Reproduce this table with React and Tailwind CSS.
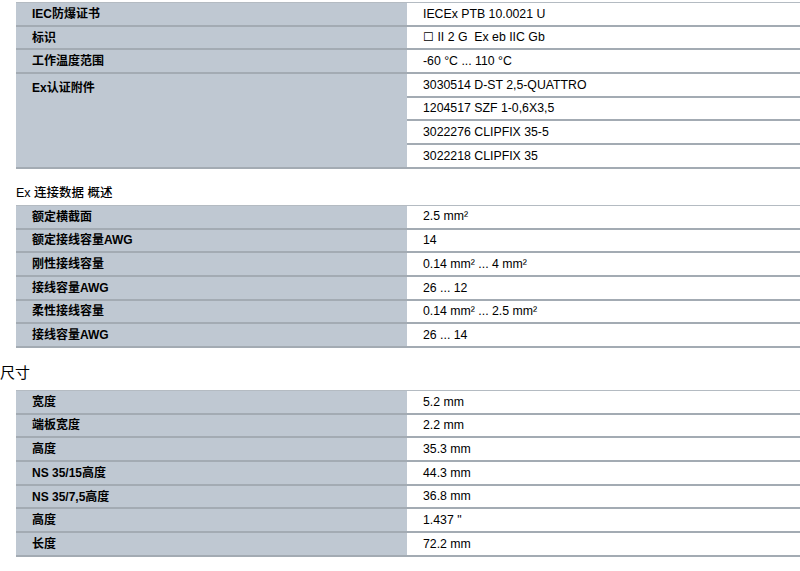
import React from "react";

const font = {
  fontFamily: '"Liberation Sans", Arial, "Noto Sans CJK SC", sans-serif',
};

const Row = ({ label, value }) => (
  <div className="grid grid-cols-[391px_1fr] h-[23.7px]">
    <div className="bg-[#bfc8d2] border-b-2 border-[#a3abb3] pl-4 flex items-center font-bold text-[12px] text-black">
      {label}
    </div>
    <div className="bg-white border-b-2 border-[#a3abb3] pl-4 flex items-center text-[12.3px] text-black whitespace-pre">
      {value}
    </div>
  </div>
);

const Table = ({ rows }) => (
  <div className="ml-4 border-t border-[#b4bbc2]">
    {rows.map((r, i) => (
      <Row key={i} label={r[0]} value={r[1]} />
    ))}
  </div>
);

const accessories = [
  "3030514 D-ST 2,5-QUATTRO",
  "1204517 SZF 1-0,6X3,5",
  "3022276 CLIPFIX 35-5",
  "3022218 CLIPFIX 35",
];

export default function App() {
  return (
    <div className="w-[800px] h-[571px] bg-white overflow-hidden pt-[2px]" style={font}>
      <Table
        rows={[
          ["IEC防爆证书", "IECEx PTB 10.0021 U"],
          ["标识", "☐ II 2 G  Ex eb IIC Gb"],
          ["工作温度范围", "-60 °C ... 110 °C"],
        ]}
      />
      {/* Ex认证附件 spans four value rows */}
      <div className="ml-4 grid grid-cols-[391px_1fr]">
        <div className="bg-[#bfc8d2] border-b-2 border-[#a3abb3] pl-4 pt-[5px] font-bold text-[12px] text-black">
          Ex认证附件
        </div>
        <div>
          {accessories.map((a) => (
            <div
              key={a}
              className="h-[23.7px] border-b-2 border-[#a3abb3] pl-4 flex items-center text-[12.3px] text-black"
            >
              {a}
            </div>
          ))}
        </div>
      </div>

      <div className="pl-4 mt-[16px] mb-[4px] text-[12.5px] font-medium text-black leading-[16px]">
        Ex 连接数据 概述
      </div>
      <Table
        rows={[
          ["额定横截面", "2.5 mm²"],
          ["额定接线容量AWG", "14"],
          ["刚性接线容量", "0.14 mm² ... 4 mm²"],
          ["接线容量AWG", "26 ... 12"],
          ["柔性接线容量", "0.14 mm² ... 2.5 mm²"],
          ["接线容量AWG", "26 ... 14"],
        ]}
      />

      <div className="mt-[16px] mb-[8px] text-[15px] text-black leading-[18px]">尺寸</div>
      <Table
        rows={[
          ["宽度", "5.2 mm"],
          ["端板宽度", "2.2 mm"],
          ["高度", "35.3 mm"],
          ["NS 35/15高度", "44.3 mm"],
          ["NS 35/7,5高度", "36.8 mm"],
          ["高度", "1.437 \""],
          ["长度", "72.2 mm"],
        ]}
      />
    </div>
  );
}
